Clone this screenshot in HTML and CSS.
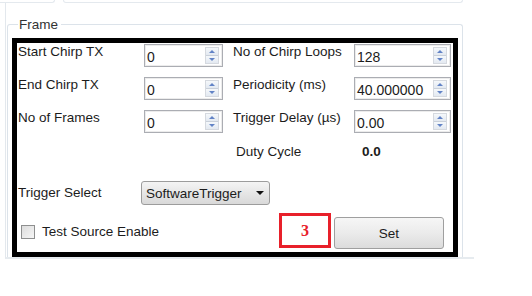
FILE: index.html
```html
<!DOCTYPE html>
<html lang="en">
<head>
  <meta charset="UTF-8">
  <title>Frame Config</title>
  <link rel="stylesheet" href="styles.css">
</head>
<body>
  <div class="tabs">
    <div class="tab tab-left"></div>
    <div class="tab tab-right"></div>
  </div>

  <div class="panel">
    <fieldset class="group">
      <legend>Frame</legend>

      <div class="frame-box">
        <div class="grid">
          <div class="label">Start Chirp TX</div>
          <div class="spin"><span class="value">0</span><span class="arrows"><i class="up"></i><i class="down"></i></span></div>
          <div class="label label-right">No of Chirp Loops</div>
          <div class="spin"><span class="value">128</span><span class="arrows"><i class="up"></i><i class="down"></i></span></div>

          <div class="label">End Chirp TX</div>
          <div class="spin"><span class="value">0</span><span class="arrows"><i class="up"></i><i class="down"></i></span></div>
          <div class="label label-right">Periodicity (ms)</div>
          <div class="spin"><span class="value">40.000000</span><span class="arrows"><i class="up"></i><i class="down"></i></span></div>

          <div class="label">No of Frames</div>
          <div class="spin"><span class="value">0</span><span class="arrows"><i class="up"></i><i class="down"></i></span></div>
          <div class="label label-right">Trigger Delay (µs)</div>
          <div class="spin"><span class="value">0.00</span><span class="arrows"><i class="up"></i><i class="down"></i></span></div>

          <div></div>
          <div></div>
          <div class="label duty">Duty Cycle</div>
          <div class="duty-value">0.0</div>
        </div>

        <div class="trigger-row">
          <div class="label trigger-label">Trigger Select</div>
          <div class="dropdown">
            <span>SoftwareTrigger</span>
            <span class="caret"></span>
          </div>
        </div>

        <div class="bottom-row">
          <label class="check">
            <span class="box"></span>
            <span>Test Source Enable</span>
          </label>
          <div class="marker">3</div>
          <button class="set-btn">Set</button>
        </div>
      </div>
    </fieldset>
  </div>
</body>
</html>
```

FILE: styles.css
```css
body {
  margin: 0;
  background-color: #fff;
  font-family: "Liberation Sans", Arial, sans-serif;
  font-size: 13.5px;
  color: #1c1c1c;
}

.tabs {
  display: flex;
  height: 3px;
}

.tab {
  height: 2px;
  border-bottom: 1px solid #e4e9ee;
}

.tab-left {
  width: 54px;
  border-right: 1px solid #e4e9ee;
  border-bottom-right-radius: 3px;
}

.tab-right {
  width: 398px;
  margin-left: 8px;
  border-left: 1px solid #e4e9ee;
  border-right: 1px solid #e4e9ee;
  border-bottom-left-radius: 3px;
  border-bottom-right-radius: 3px;
}

.panel {
  margin-left: 5px;
  width: 467px;
  padding: 14px 0 0 1px;
  border-left: 1px solid #e3e8ed;
  border-bottom: 2px solid #e6ebef;
}

.group {
  margin: 0;
  width: 456px;
  box-sizing: border-box;
  padding: 6px 0 0 4px;
  border: 1px solid #dce3ea;
  border-bottom: none;
  border-radius: 3px 3px 0 0;
}

.group legend {
  margin-left: 6px;
  padding: 0 3px 0 1px;
  line-height: 15px;
  color: #333;
}

.frame-box {
  width: 446px;
  height: 219px;
  box-sizing: border-box;
  border: 5px solid #000;
  padding: 1px 0 0 1px;
}

.grid {
  display: grid;
  grid-template-columns: 126px 79px 131px 97px;
  grid-template-rows: 22px 22px 22px 18px;
  row-gap: 11px;
}

.label {
  line-height: 16px;
  white-space: nowrap;
}

.label-right {
  padding-left: 10px;
}

.duty {
  padding-left: 13px;
  line-height: 18px;
}

.duty-value {
  padding-left: 8px;
  line-height: 18px;
  font-weight: bold;
}

.spin {
  position: relative;
  box-sizing: border-box;
  height: 23px;
  border: 1px solid #abadb3;
  box-shadow: inset 0 0 0 1px #ececec;
  background: #fff;
}

.spin .value {
  display: block;
  padding: 4px 0 0 2px;
  line-height: 16px;
  font-size: 14px;
}

.arrows {
  position: absolute;
  top: 2px;
  right: 3px;
  width: 14px;
  height: 17px;
  display: flex;
  flex-direction: column;
  border: 1px solid #d5d9df;
  box-sizing: border-box;
}

.arrows i {
  flex: 1;
  position: relative;
  background: linear-gradient(#f5f8fb, #e3e9f1);
}

.arrows i.up {
  border-bottom: 1px solid #c9d0da;
}

.arrows i::after {
  content: "";
  position: absolute;
  left: 3px;
  top: 2px;
  border-left: 3px solid transparent;
  border-right: 3px solid transparent;
}

.arrows i.up::after {
  border-bottom: 3px solid #6283c6;
}

.arrows i.down::after {
  border-top: 3px solid #6283c6;
}

.trigger-row {
  display: flex;
  align-items: center;
  margin-top: 20px;
  height: 24px;
}

.trigger-label {
  width: 123px;
}

.dropdown {
  display: flex;
  align-items: center;
  justify-content: space-between;
  width: 129px;
  height: 24px;
  box-sizing: border-box;
  padding: 0 5px 0 4px;
  border: 1px solid #9c9c9c;
  border-radius: 3px;
  background: linear-gradient(#f4f4f4, #e6e6e6 50%, #d9d9d9);
  font-size: 13.5px;
}

.caret {
  border-left: 4px solid transparent;
  border-right: 4px solid transparent;
  border-top: 4px solid #111;
}

.bottom-row {
  display: flex;
  align-items: flex-start;
  margin-top: 8px;
}

.check {
  display: flex;
  align-items: center;
  gap: 7px;
  width: 258px;
  margin-top: 11px;
  padding-left: 3px;
}

.check .box {
  width: 14px;
  height: 14px;
  box-sizing: border-box;
  border: 1px solid #8e8f8f;
  background: linear-gradient(135deg, #dcdcdc, #f6f6f6);
}

.marker {
  width: 52px;
  height: 35px;
  box-sizing: border-box;
  border: 3px solid #e8202a;
  color: #e8202a;
  font-family: "Liberation Serif", "Times New Roman", serif;
  font-size: 16px;
  font-weight: bold;
  line-height: 29px;
  text-align: center;
}

.set-btn {
  width: 110px;
  height: 32px;
  margin: 4px 0 0 3px;
  border: 1px solid #9f9f9f;
  border-radius: 3px;
  background: linear-gradient(#f6f6f6, #ebebeb 50%, #dcdcdc);
  font-family: "Liberation Sans", Arial, sans-serif;
  font-size: 13.5px;
  color: #1c1c1c;
}
```
